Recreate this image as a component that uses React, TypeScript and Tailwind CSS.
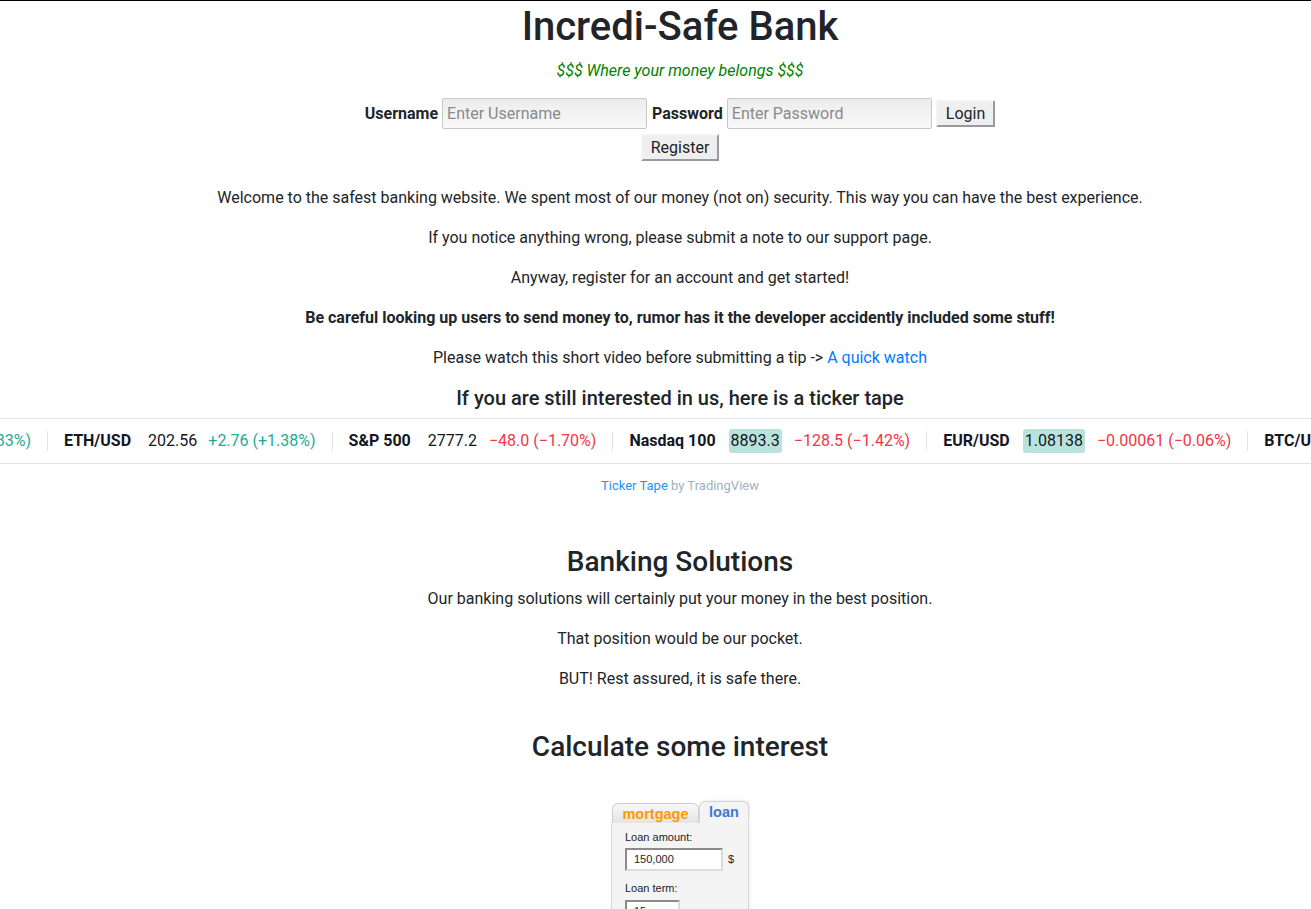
import React from 'react';

type Quote = {
  symbol: string;
  price: string;
  change: string;
  up: boolean;
  flash?: boolean;
};

const quotes: Quote[] = [
  { symbol: 'ETH/USD', price: '202.56', change: '+2.76 (+1.38%)', up: true },
  { symbol: 'S&P 500', price: '2777.2', change: '\u221248.0 (\u22121.70%)', up: false },
  { symbol: 'Nasdaq 100', price: '8893.3', change: '\u2212128.5 (\u22121.42%)', up: false, flash: true },
  { symbol: 'EUR/USD', price: '1.08138', change: '\u22120.00061 (\u22120.06%)', up: false, flash: true },
  { symbol: 'BTC/USD', price: '6859.4', change: '+110.5 (+1.64%)', up: true },
];

function TickerItem({ q }: { q: Quote }) {
  return (
    <div className="flex items-center shrink-0">
      <div className="w-px h-[20px] bg-[#e0e3eb]" />
      <div className="flex items-center pl-[16px] pr-[16px] whitespace-nowrap">
        <span className="font-bold text-[#131722]">{q.symbol}</span>
        <span
          className={
            q.flash
              ? 'ml-[13px] px-[2px] rounded-[3px] bg-[#bae2dd] text-[#131722] leading-[24px]'
              : 'ml-[17px] text-[#131722] leading-[24px]'
          }
        >
          {q.price}
        </span>
        <span className={q.up ? 'ml-[11px] text-[#22ab94]' : 'ml-[12px] text-[#f23645]'}>{q.change}</span>
      </div>
    </div>
  );
}

function TickerTape() {
  return (
    <div>
      <div className="h-[46px] border-y border-[#e0e3eb] flex items-center overflow-hidden text-[16px]">
        {/* tail of the item that has scrolled off */}
        <div className="w-[32px] shrink-0 overflow-hidden flex justify-end pr-[1px]">
          <span className="text-[#22ab94] whitespace-nowrap">(+1.83%)</span>
        </div>
        <div className="w-[15px] shrink-0" />
        {quotes.map((q) => (
          <TickerItem key={q.symbol} q={q} />
        ))}
      </div>
      <div className="text-center text-[13px] leading-[16px] mt-[14px] font-['Roboto',sans-serif]">
        <a className="text-[#2196f3]">Ticker Tape</a>
        <span className="text-[#9db2bd]"> by TradingView</span>
      </div>
    </div>
  );
}

function LoanCalculator() {
  return (
    <div className="w-[138px] font-['Liberation_Sans',Arial,sans-serif]">
      <div className="flex items-end h-[22px] pl-[1px]">
        <div className="w-[87px] h-[20px] border border-b-0 border-[#cfcfcf] rounded-t-[6px] bg-gradient-to-b from-[#f8f8f8] to-[#e4e4e4] flex items-center justify-center">
          <span className="text-[14.5px] font-bold text-[#ff9900] leading-none mt-[1px]">mortgage</span>
        </div>
        <div className="w-[50px] h-[22px] border border-b-0 border-[#d8d8d8] rounded-t-[6px] bg-[#f4f4f4] flex items-start justify-center shadow-[1px_-1px_2px_rgba(0,0,0,0.08)]">
          <span className="text-[14.5px] font-bold text-[#3a7bd5] leading-none mt-[3px]">loan</span>
        </div>
      </div>
      <div className="h-[90px] bg-[#f4f4f4] border border-t-0 border-[#d8d8d8] rounded-bl-[6px] px-[13px] pt-[8px] text-[11px] text-[#222] shadow-[1px_1px_3px_rgba(0,0,0,0.08)]">
        <div className="leading-[13px]">Loan amount:</div>
        <div className="flex items-center mt-[3px]">
          <div className="w-[98px] h-[23px] bg-white border-2 border-t-[#8a8a8a] border-l-[#8a8a8a] border-r-[#dcdcdc] border-b-[#dcdcdc] flex items-center pl-[7px]">
            150,000
          </div>
          <span className="ml-[5px]">$</span>
        </div>
        <div className="leading-[13px] mt-[11px]">Loan term:</div>
        <div className="flex items-center mt-[4px]">
          <div className="w-[55px] h-[23px] bg-white border-2 border-t-[#8a8a8a] border-l-[#8a8a8a] border-r-[#dcdcdc] border-b-[#dcdcdc] flex items-center pl-[7px]">
            15
          </div>
          <span className="ml-[5px]">years</span>
        </div>
      </div>
    </div>
  );
}

export default function App() {
  return (
    <div className="w-full h-[909px] overflow-hidden bg-white">
      <div className="w-[1360px] border-t border-black font-['Roboto','Liberation_Sans',sans-serif] text-[#212529] text-[16px] leading-[24px]">
        <h1 className="mt-[2px] mb-2 text-center text-[40px] leading-[48px] font-medium">Incredi-Safe Bank</h1>
        <p className="text-center italic text-[#008000] mb-[15px]">$$$ Where your money belongs $$$</p>

        {/* login */}
        <div className="flex flex-col items-center">
          <div className="flex items-center h-[31px]">
            <label className="font-bold mr-[4px]">Username</label>
            <input
              placeholder="Enter Username"
              className="w-[205px] h-[31px] px-[4px] border border-[#c8c8c8] rounded-[2px] bg-gradient-to-b from-[#ececec] to-[#f9f9f9] placeholder:text-[#8a8a8a] outline-none"
            />
            <label className="font-bold ml-[5px] mr-[4px]">Password</label>
            <input
              placeholder="Enter Password"
              className="w-[205px] h-[31px] px-[4px] border border-[#c8c8c8] rounded-[2px] bg-gradient-to-b from-[#ececec] to-[#f9f9f9] placeholder:text-[#8a8a8a] outline-none"
            />
            <button className="ml-[4px] h-[27px] px-[8px] bg-[#efefef] border-2 border-t-[#f4f4f4] border-l-[#f4f4f4] border-r-[#9a9a9a] border-b-[#9a9a9a] leading-[20px]">
              Login
            </button>
          </div>
          <button className="mt-[5px] h-[27px] px-[8px] bg-[#efefef] border-2 border-t-[#f4f4f4] border-l-[#f4f4f4] border-r-[#9a9a9a] border-b-[#9a9a9a] leading-[20px]">
            Register
          </button>
        </div>

        <div className="mt-[25px] text-center">
          <p className="mb-4">
            Welcome to the safest banking website. We spent most of our money (not on) security. This way you can have the best experience.
          </p>
          <p className="mb-4">If you notice anything wrong, please submit a note to our support page.</p>
          <p className="mb-4">Anyway, register for an account and get started!</p>
          <p className="mb-4 font-bold">Be careful looking up users to send money to, rumor has it the developer accidently included some stuff!</p>
          <p className="mb-4">
            Please watch this short video before submitting a tip -&gt; <a className="text-[#007bff]">A quick watch</a>
          </p>
          <h4 className="mb-2 text-[20px] leading-[24px] font-medium">If you are still interested in us, here is a ticker tape</h4>
        </div>

        <TickerTape />

        <div className="mt-[51px] text-center">
          <h2 className="mb-2 text-[28px] leading-[34px] font-medium">Banking Solutions</h2>
          <p className="mb-4">Our banking solutions will certainly put your money in the best position.</p>
          <p className="mb-4">That position would be our pocket.</p>
          <p className="mb-4">BUT! Rest assured, it is safe there.</p>
          <h2 className="mt-[39px] text-[28px] leading-[34px] font-medium">Calculate some interest</h2>
        </div>

        <div className="mt-[37px] flex justify-center">
          <LoanCalculator />
        </div>
      </div>
    </div>
  );
}
